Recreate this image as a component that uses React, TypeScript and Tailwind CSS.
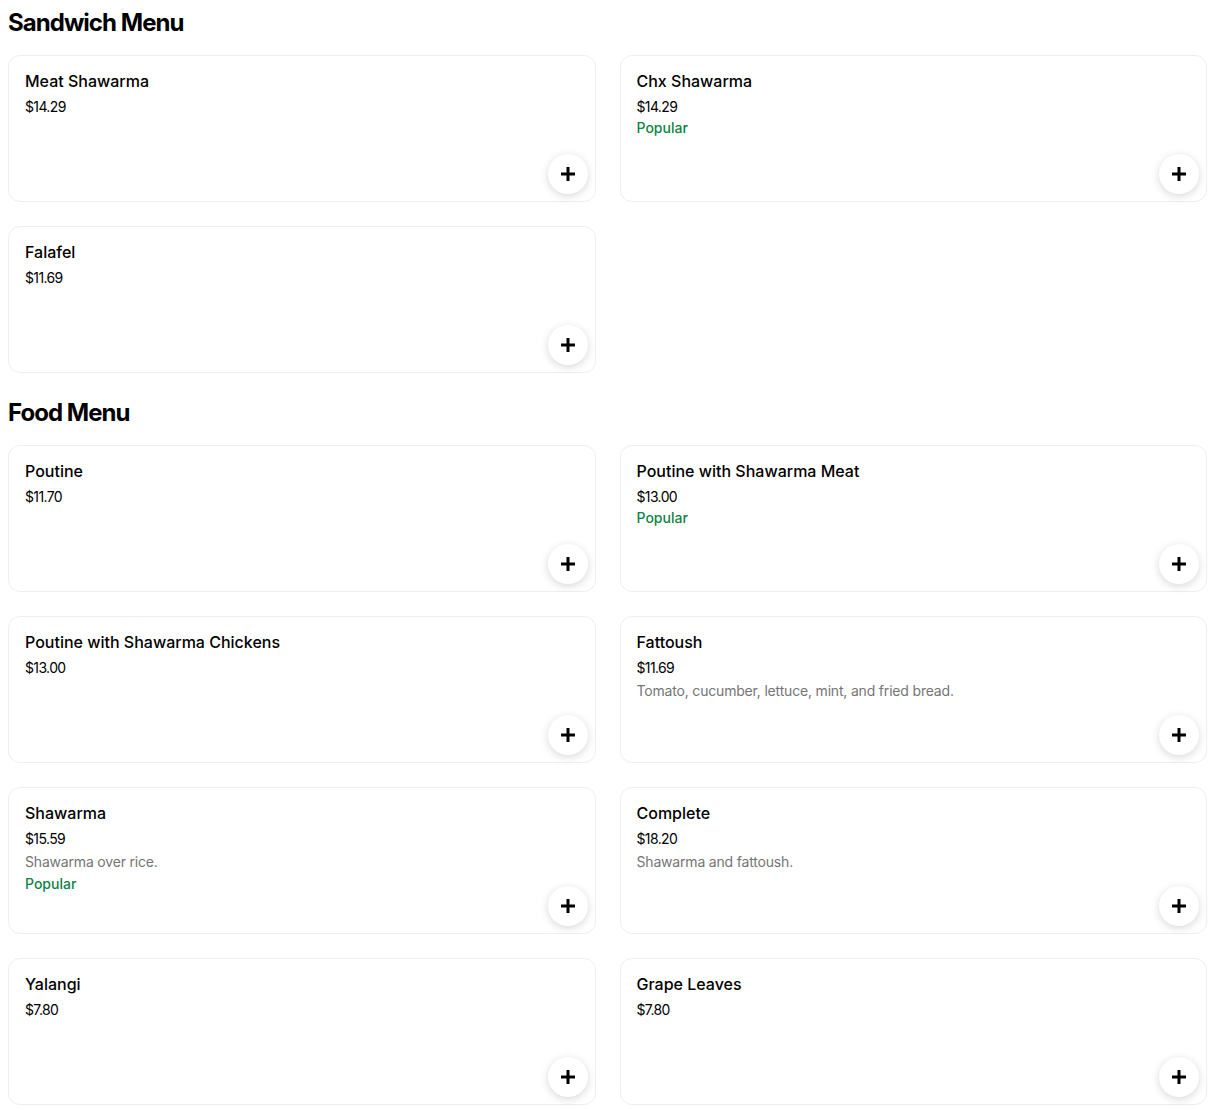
type Item = {
  name: string;
  price: string;
  description?: string;
  popular?: boolean;
};

type Section = {
  title: string;
  items: Item[];
};

const sections: Section[] = [
  {
    title: 'Sandwich Menu',
    items: [
      { name: 'Meat Shawarma', price: '$14.29' },
      { name: 'Chx Shawarma', price: '$14.29', popular: true },
      { name: 'Falafel', price: '$11.69' },
    ],
  },
  {
    title: 'Food Menu',
    items: [
      { name: 'Poutine', price: '$11.70' },
      { name: 'Poutine with Shawarma Meat', price: '$13.00', popular: true },
      { name: 'Poutine with Shawarma Chickens', price: '$13.00' },
      { name: 'Fattoush', price: '$11.69', description: 'Tomato, cucumber, lettuce, mint, and fried bread.' },
      { name: 'Shawarma', price: '$15.59', description: 'Shawarma over rice.', popular: true },
      { name: 'Complete', price: '$18.20', description: 'Shawarma and fattoush.' },
      { name: 'Yalangi', price: '$7.80' },
      { name: 'Grape Leaves', price: '$7.80' },
    ],
  },
];

// chunky plus used on the quick-add buttons
const PlusIcon = () => (
  <svg width="14" height="14" viewBox="0 0 14 14" aria-hidden="true">
    <rect x="5.5" y="0" width="3" height="14" fill="#000" />
    <rect x="0" y="5.5" width="14" height="3" fill="#000" />
  </svg>
);

const MenuCard = ({ item }: { item: Item }) => (
  <div className="relative h-[147px] rounded-xl border border-[#eeeeee] bg-white px-4 pt-[15px]">
    <div className="text-base leading-5 font-medium text-black">{item.name}</div>
    <div className="mt-[6px] text-sm leading-5 tracking-[-0.045em] text-black">{item.price}</div>
    {item.description && (
      <div className="mt-[3px] text-sm leading-5 tracking-[-0.013em] text-[#757575]">{item.description}</div>
    )}
    {item.popular && (
      <div className={`${item.description ? 'mt-[2px]' : 'mt-[1px]'} text-sm leading-5 font-medium text-[#0e8345]`}>
        Popular
      </div>
    )}
    <button className="absolute right-[7px] bottom-[7px] flex h-10 w-10 items-center justify-center rounded-full bg-white shadow-[0_2px_8px_rgba(0,0,0,0.16)]">
      <PlusIcon />
    </button>
  </div>
);

export default function App() {
  return (
    <div className="min-h-screen bg-white px-2 pt-[6px] font-['Inter',sans-serif] text-black">
      {sections.map((section) => (
        <section key={section.title} className="mb-[23px]">
          <h2 className="mb-[16px] pt-px text-2xl leading-8 font-bold tracking-[-0.04em]">{section.title}</h2>
          <div className="grid grid-cols-2 gap-6">
            {section.items.map((item) => (
              <MenuCard key={item.name} item={item} />
            ))}
          </div>
        </section>
      ))}
    </div>
  );
}
